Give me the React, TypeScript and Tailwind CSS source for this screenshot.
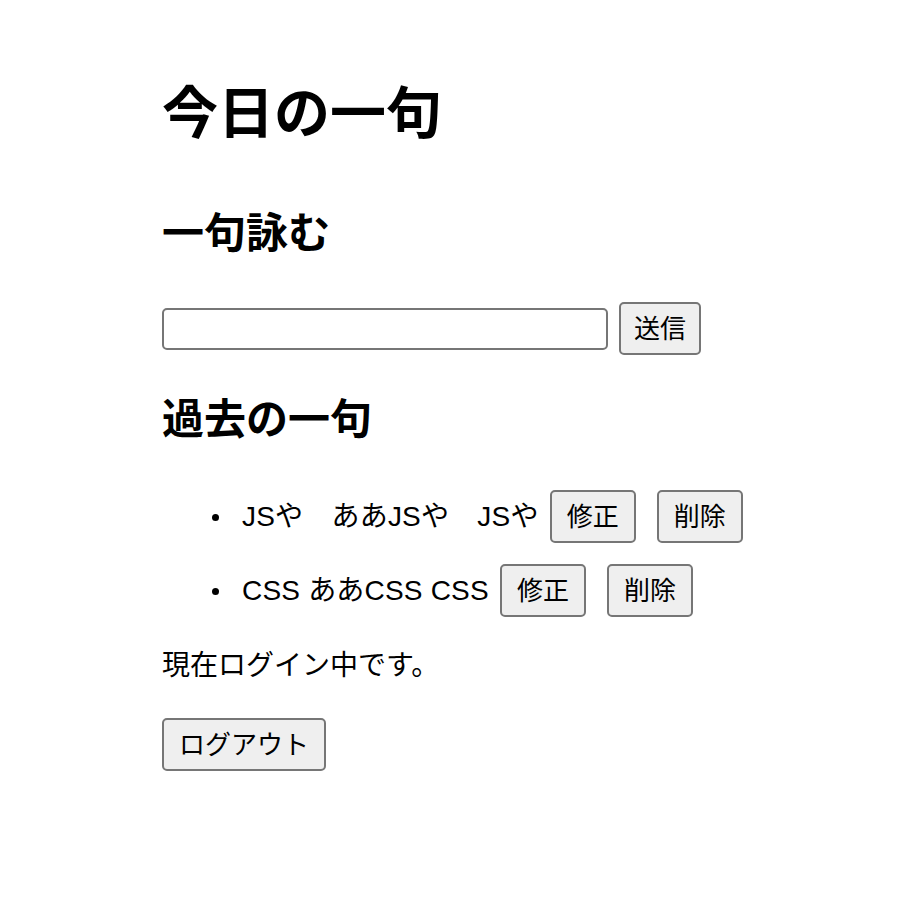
import React, { useState } from 'react';

type Haiku = { id: number; text: string };

const initial: Haiku[] = [
  { id: 1, text: 'JSや　ああJSや　JSや' },
  { id: 2, text: 'CSS ああCSS CSS' },
];

const btn =
  'h-[53px] bg-[#efefef] border-2 border-[#767676] rounded-[5px] text-[26px] leading-none text-black';

export default function App() {
  const [items] = useState<Haiku[]>(initial);
  const [draft, setDraft] = useState('');

  return (
    <div
      className="min-h-[906px] bg-white pl-[162px] pt-[84px] text-black"
      style={{ fontFamily: '"Liberation Sans", "Noto Sans CJK JP", sans-serif' }}
    >
      <h1 className="h-[60px] flex items-center text-[56px] font-bold">今日の一句</h1>

      <h2 className="mt-[66px] h-[46px] flex items-center text-[42px] font-bold">一句詠む</h2>

      <form
        className="mt-[46px] flex items-center h-[53px]"
        onSubmit={(e) => {
          e.preventDefault();
          setDraft('');
        }}
      >
        <input
          type="text"
          value={draft}
          onChange={(e) => setDraft(e.target.value)}
          className="w-[446px] h-[42px] border-2 border-[#767676] rounded-[5px] px-2 text-[28px]"
        />
        <button type="submit" className={`${btn} ml-[11px] px-[13px]`}>
          送信
        </button>
      </form>

      <h2 className="mt-[41px] h-[46px] flex items-center text-[42px] font-bold">過去の一句</h2>

      <ul className="mt-[48px] pl-[50px] flex flex-col gap-[21px]">
        {items.map((item) => (
          <li key={item.id} className="flex items-center h-[53px] text-[28px]">
            <span className="shrink-0 w-[7px] h-[7px] rounded-full bg-black mr-[23px] mt-[2px]" />
            <span className="whitespace-pre tracking-[0.2px]">{item.text}</span>
            <button className={`${btn} ml-[11px] px-[15px]`}>修正</button>
            <button className={`${btn} ml-[21px] px-[15px]`}>削除</button>
          </li>
        ))}
      </ul>

      <p className="mt-[34px] h-[30px] flex items-center text-[28px]">現在ログイン中です。</p>

      <button className={`${btn} mt-[37px] px-[15px]`}>ログアウト</button>
    </div>
  );
}
